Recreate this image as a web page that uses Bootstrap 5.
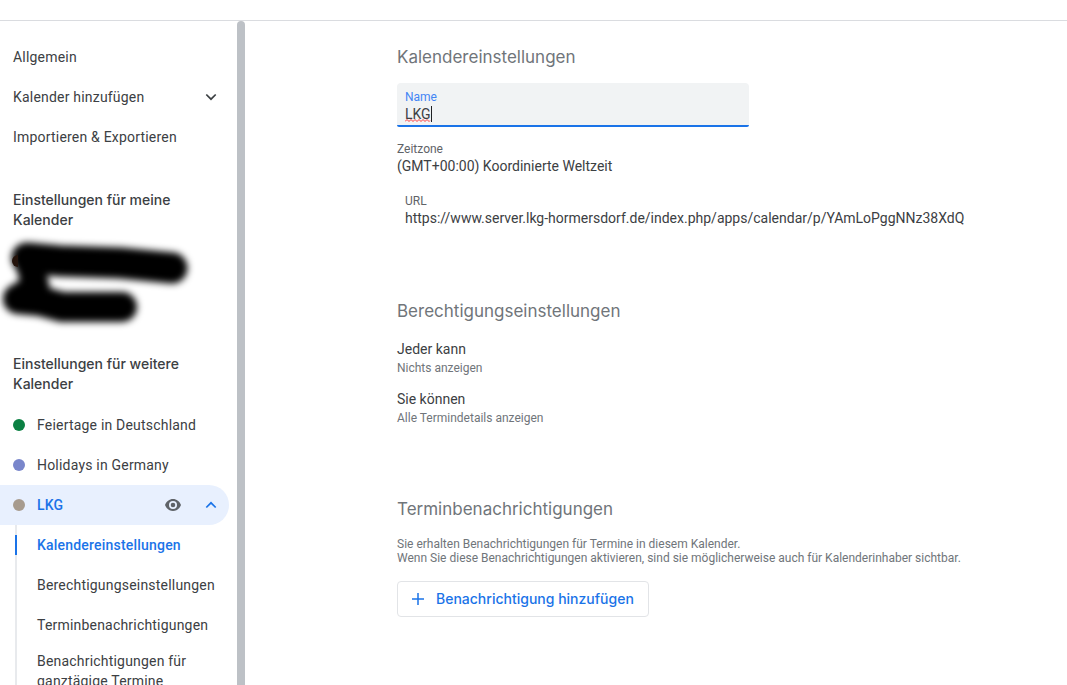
<!DOCTYPE html>
<html lang="de">
<head>
<meta charset="utf-8">
<meta name="viewport" content="width=device-width, initial-scale=1">
<title>Kalendereinstellungen</title>
<link href="https://cdn.jsdelivr.net/npm/bootstrap@5.3.0/dist/css/bootstrap.min.css" rel="stylesheet">
<style>
  body { font: 14px/20px Roboto, "Liberation Sans", sans-serif; color: #3c4043; }
  a { color: inherit; text-decoration: none; }
  .topbar { height: 21px; border-bottom: 1px solid #dadce0; }
  .sidebar { width: 237px; padding-top: 16px; letter-spacing: .2px; }
  .track { width: 8px; border-radius: 4px 4px 0 0; background: #bdc1c6; }
  .entry { min-height: 40px; padding: 10px 12px 10px 13px; margin-right: 8px; }
  .entry.current { background: #e8f0fe; color: #1a73e8; border-radius: 0 20px 20px 0; font-weight: 500; }
  .side-title { font: 500 14px/20px Inter, sans-serif; margin: 0 40px 0 13px; letter-spacing: 0; }
  .gap-top { margin-top: 33px; }
  .hidden-names { height: 124px; }
  .calendars { padding-top: 11px; }
  .dot { width: 12px; height: 12px; border-radius: 50%; background: var(--dot); }
  .sub { margin-left: 15px; border-left: 2px solid #e8eaed; }
  .sub a { display: block; padding: 10px 0 10px 20px; }
  .sub .tall { padding-top: 6px; }
  .sub .active { position: relative; color: #1a73e8; font-weight: 500; }
  .sub .active::before { content: ""; position: absolute; left: -2px; top: 10px; bottom: 10px; width: 2px; background: #1a73e8; }
  .content { padding: 24px 24px 0 152px; }
  .content h2 { font: 400 17px/24px Inter, sans-serif; color: #70757a; margin: 0 0 16px; }
  .content .general h2 { margin-bottom: 14px; }
  .general { margin-bottom: 71px; }
  .rights { margin-bottom: 72px; }
  .rights .hint { margin: 2px 0 14px; }
  .field { max-width: 352px; height: 44px; background: #f1f3f4; border-bottom: 2px solid #1a73e8; border-radius: 4px 4px 2px 2px; padding: 7px 8px 0; margin-bottom: 15px; }
  .field label { font-size: 12px; line-height: 14px; color: #4285f4; }
  .field input { height: 20px; line-height: 20px; border: 0; padding: 0; background: none; outline: 0; color: #3c4043; }
  .spell { left: 8px; top: 23px; }
  .cap { font-size: 12px; line-height: 14px; color: #5f6368; }
  .hint { font-size: 12px; line-height: 14px; color: #70757a; }
  .indent { padding-left: 8px; margin-top: 18px; }
  .add { width: 252px; height: 36px; margin-top: 16px; padding: 0 0 0 14px; border: 1px solid #e2e4e7; border-radius: 4px; color: #1a73e8; font: 500 14px/20px Inter, sans-serif; }
</style>
</head>
<body class="bg-white">
<div class="vh-100 d-flex flex-column overflow-hidden">
  <header class="topbar flex-shrink-0"></header>
  <div class="d-flex flex-grow-1 overflow-hidden">
    <nav class="sidebar flex-shrink-0">
      <a href="#" class="entry d-flex">Allgemein</a>
      <a href="#" class="entry d-flex align-items-center justify-content-between">Kalender hinzufügen
        <svg width="12" height="12" viewBox="0 0 12 12" fill="none" stroke="#3c4043" stroke-width="1.700"><path d="M1.300 3.500L6 8.200l4.700-4.700"/></svg></a>
      <a href="#" class="entry d-flex">Importieren &amp; Exportieren</a>
      <h3 class="side-title gap-top">Einstellungen für meine Kalender</h3>
      <div class="hidden-names">
        <svg class="d-block overflow-visible" width="200" height="124" viewBox="0 230 200 124" fill="none" stroke="#000" stroke-linecap="round" stroke-linejoin="round">
          <defs><filter id="soft" filterUnits="userSpaceOnUse" x="-20" y="225" width="240" height="120"><feGaussianBlur stdDeviation="3.500"/></filter></defs>
          <g filter="url(#soft)">
            <path d="M27 258L60 261L120 263L172 268" stroke-width="31"/>
            <path d="M30 268L36 286L17 298" stroke-width="27"/>
            <path d="M18 299L40 301L62 307L122 307" stroke-width="30"/>
          </g>
          <path d="M18 255a6 6 0 0 0 0 12" stroke="none" fill="#24130b"/>
        </svg>
      </div>
      <h3 class="side-title mb-0">Einstellungen für weitere Kalender</h3>
      <div class="calendars">
        <a href="#" class="entry d-flex align-items-center gap-2"><span class="dot me-1" style="--dot:#0b8043"></span>Feiertage in Deutschland</a>
        <a href="#" class="entry d-flex align-items-center gap-2"><span class="dot me-1" style="--dot:#7986cb"></span>Holidays in Germany</a>
        <a href="#" class="entry current d-flex align-items-center gap-2"><span class="dot me-1" style="--dot:#a79b8e"></span>LKG
          <svg class="ms-auto me-3" width="16" height="12" viewBox="0 0 16 12"><path fill="#5f6368" fill-rule="evenodd" d="M8 0C4.400 0 1.300 2.500 0 6c1.300 3.500 4.400 6 8 6s6.700-2.500 8-6c-1.300-3.500-4.400-6-8-6zm0 10a4 4 0 1 1 0-8 4 4 0 0 1 0 8zm0-6.300a2.300 2.300 0 1 0 0 4.600 2.300 2.300 0 0 0 0-4.600z"/></svg>
          <svg width="12" height="12" viewBox="0 0 12 12" fill="none" stroke="#1a73e8" stroke-width="1.700"><path d="M1.300 8.500L6 3.800l4.700 4.700"/></svg></a>
      </div>
      <div class="sub">
        <a href="#" class="active">Kalendereinstellungen</a>
        <a href="#">Berechtigungseinstellungen</a>
        <a href="#">Terminbenachrichtigungen</a>
        <a href="#" class="tall">Benachrichtigungen für<br>ganztägige Termine</a>
      </div>
    </nav>
    <div class="track flex-shrink-0"></div>
    <main class="content flex-grow-1">
      <section class="general">
        <h2>Kalendereinstellungen</h2>
        <div class="field position-relative d-flex flex-column">
          <label for="calname">Name</label>
          <input id="calname" type="text" value="LKG" spellcheck="false">
          <svg class="spell position-absolute" width="28" height="17" fill="none"><path d="M0 15.500l2-2 2 2 2-2 2 2 2-2 2 2 2-2 2 2 2-2 2 2 2-2 2 2 1-1" stroke="#f33"/><path d="M26.500 0v16" stroke="#202124"/></svg>
        </div>
        <div class="cap">Zeitzone</div>
        <div>(GMT+00:00) Koordinierte Weltzeit</div>
        <div class="indent">
          <div class="cap">URL</div>
          <div class="text-break">https://www.server.lkg-hormersdorf.de/index.php/apps/calendar/p/YAmLoPggNNz38XdQ</div>
        </div>
      </section>
      <section class="rights">
        <h2>Berechtigungseinstellungen</h2>
        <div>Jeder kann</div>
        <div class="hint">Nichts anzeigen</div>
        <div>Sie können</div>
        <div class="hint mb-0">Alle Termindetails anzeigen</div>
      </section>
      <section>
        <h2>Terminbenachrichtigungen</h2>
        <p class="hint mb-0">Sie erhalten Benachrichtigungen für Termine in diesem Kalender.<br>Wenn Sie diese Benachrichtigungen aktivieren, sind sie möglicherweise auch für Kalenderinhaber sichtbar.</p>
        <button type="button" class="add btn d-flex align-items-center">
          <svg class="me-2" width="12" height="12" fill="none" stroke="#1a73e8" stroke-width="1.500"><path d="M6 0v12M0 6h12"/></svg><span class="ms-1">Benachrichtigung hinzufügen</span></button>
      </section>
    </main>
  </div>
</div>
<script src="https://cdn.jsdelivr.net/npm/bootstrap@5.3.0/dist/js/bootstrap.bundle.min.js"></script>
</body>
</html>
